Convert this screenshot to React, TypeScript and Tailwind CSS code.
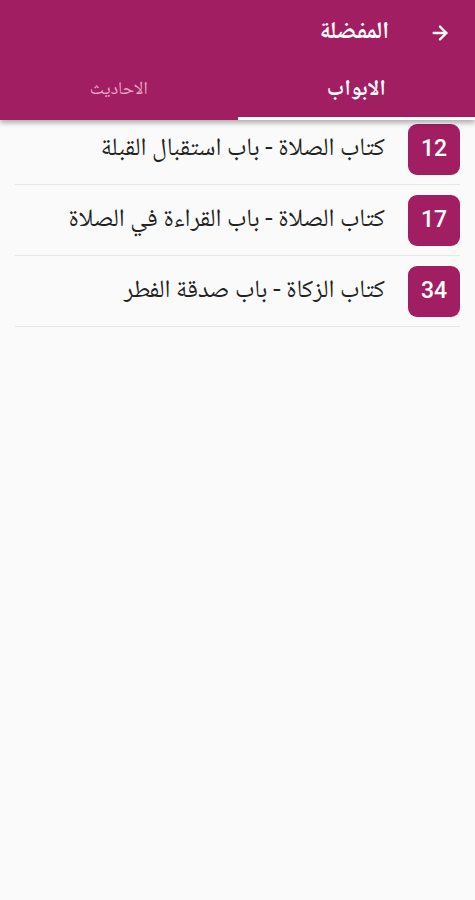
import React from 'react';
import { ArrowRight } from 'lucide-react';

const items = [
  { num: 12, title: 'كتاب الصلاة - باب استقبال القبلة' },
  { num: 17, title: 'كتاب الصلاة - باب القراءة في الصلاة' },
  { num: 34, title: 'كتاب الزكاة - باب صدقة الفطر' },
];

const arabic = "font-['Noto_Naskh_Arabic','Noto_Sans_Arabic','DejaVu_Sans',sans-serif]";

export default function App() {
  return (
    <div dir="rtl" className={`min-h-[900px] w-full bg-[#fafafa] ${arabic}`}>
      {/* Toolbar + tabs */}
      <div className="relative z-10 h-[120px] bg-[#a21e62] shadow-[0_3px_5px_rgba(0,0,0,0.3)]">
        <div className="flex h-[66px] items-center pr-[24px]">
          <ArrowRight size={22} strokeWidth={2.5} className="text-white" />
          <h1 className="mr-[40px] text-[24px] font-bold text-white">المفضلة</h1>
        </div>
        <div className="flex h-[54px]">
          <div className="relative flex flex-1 items-center justify-center pb-[6px]">
            <span className="text-[22px] font-bold text-white">الابواب</span>
            <div className="absolute bottom-0 left-0 right-0 h-[3px] bg-white" />
          </div>
          <div className="flex flex-1 items-center justify-center pb-[6px]">
            <span className="text-[18px] text-[#e8a8c8]">الاحاديث</span>
          </div>
        </div>
      </div>

      {/* List */}
      <div className="-mt-[6px] px-[15px]">
        {items.map((item) => (
          <div key={item.num} className="flex h-[71px] items-center border-b border-[#e6e6e6]">
            <div className="flex h-[51px] w-[52px] items-center justify-center rounded-[9px] bg-[#a21e62] text-[23px] font-medium text-white font-['Roboto',sans-serif]">
              {item.num}
            </div>
            <div className="mr-[23px] text-[25px] leading-none text-[#222]">{item.title}</div>
          </div>
        ))}
      </div>
    </div>
  );
}
